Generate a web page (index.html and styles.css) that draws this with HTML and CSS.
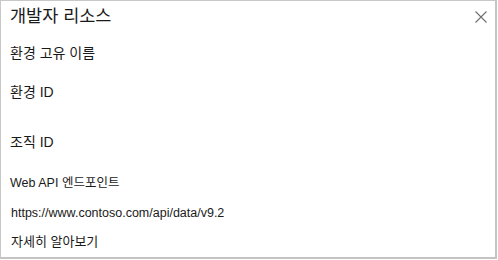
FILE: index.html
```html
<!DOCTYPE html>
<html lang="ko">
<head>
<meta charset="utf-8">
<link rel="stylesheet" href="styles.css">
</head>
<body>
<div class="panel">
  <div class="header">
    <h1 class="title">개발자 리소스</h1>
    <button class="close" aria-label="닫기">
      <svg width="12" height="12" viewBox="0 0 12 12"><path d="M0.5 0.5 L11.5 11.5 M11.5 0.5 L0.5 11.5" stroke="#6e6e6e" stroke-width="1.1" fill="none"/></svg>
    </button>
  </div>
  <div class="field f1">환경 고유 이름</div>
  <div class="field f2">환경 ID</div>
  <div class="field f3">조직 ID</div>
  <div class="label">Web API 엔드포인트</div>
  <div class="url">https://www.contoso.com/api/data/v9.2</div>
  <div class="link">자세히 알아보기</div>
</div>
</body>
</html>
```
FILE: styles.css
```css
html, body { margin: 0; padding: 0; background: #fff; }
body { font-family: "Liberation Sans", "Noto Sans CJK KR", sans-serif; color: #1a1a1a; }
.panel {
  width: 494px;
  height: 256px;
  border: 1px solid #c8c8c8;
  border-right: 2px solid #c4c4c4;
  border-bottom: 2px solid #c4c4c4;
  box-sizing: content-box;
  display: flex;
  flex-direction: column;
  padding: 0;
}
.header { display: flex; justify-content: space-between; align-items: flex-start; padding: 4px 0 0 9px; height: 30px; }
.title { margin: 0; font-size: 17.5px; font-weight: 400; line-height: 22px; }
.close { border: 0; background: none; padding: 0; margin: 6px 8px 0 0; width: 12px; height: 12px; display: flex; }
.field { font-size: 14px; line-height: 18px; padding-left: 9px; }
.f1 { margin-top: 9px; }
.f2 { margin-top: 21px; }
.f3 { margin-top: 32px; }
.label { font-size: 12.5px; line-height: 16px; padding-left: 9px; margin-top: 24px; }
.url { font-size: 12.5px; line-height: 16px; padding-left: 10px; margin-top: 14px; }
.link { font-size: 13px; line-height: 16px; padding-left: 10px; margin-top: 13px; }
```
